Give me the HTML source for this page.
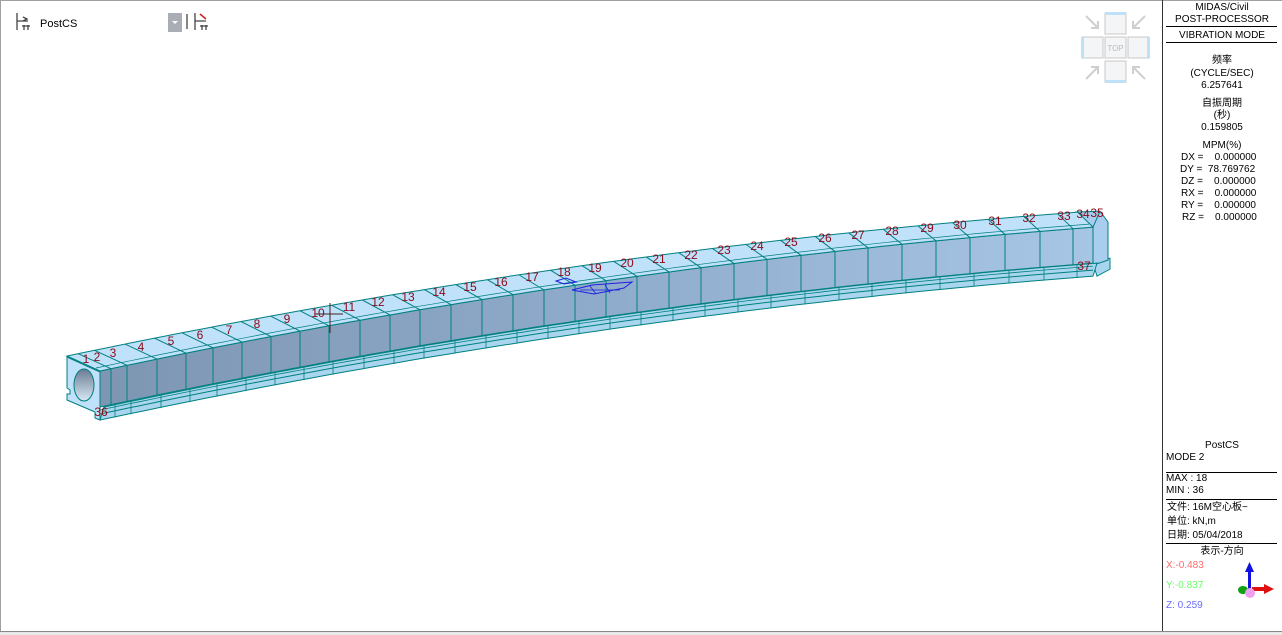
<!DOCTYPE html>
<html><head><meta charset="utf-8"><style>
html,body{margin:0;padding:0;background:#fff;}
body{width:1282px;height:635px;position:relative;overflow:hidden;font-family:"Liberation Sans","Noto Sans CJK SC",sans-serif;}
.p{position:absolute;font-size:10px;color:#000;white-space:nowrap;line-height:12px;}
.c{width:116px;left:1164px;text-align:center;}
.hl{position:absolute;left:1166px;width:111px;height:1px;background:#000;}
</style></head><body>
<div style="position:absolute;left:0;top:0;width:1282px;height:1px;background:#a0a0a0"></div>
<div style="position:absolute;left:0;top:0;width:1px;height:632px;background:#a0a0a0"></div>
<div style="position:absolute;left:1162px;top:0;width:1px;height:632px;background:#333"></div>
<div style="position:absolute;left:0;top:631px;width:1282px;height:1px;background:#888"></div>
<div style="position:absolute;left:0;top:632px;width:1282px;height:3px;background:#e8e8e8"></div>

<svg style="position:absolute;left:0;top:0" width="1162" height="631" id="sv">
<defs>
<linearGradient id="fg" x1="0" x2="1" y1="0" y2="0"><stop offset="0" stop-color="#7d96b2"/><stop offset="0.5" stop-color="#8fabcb"/><stop offset="1" stop-color="#a7c5e5"/></linearGradient>
<linearGradient id="hg" x1="0" y1="0" x2="0" y2="1"><stop offset="0" stop-color="#6a7c92"/><stop offset="1" stop-color="#d8e8f5"/></linearGradient>
</defs>
<g stroke="#444" stroke-width="1.3" fill="none">
<path d="M17 13v17M17 21h11M23 17l4 2-4 2M24 25v5M28 25v5M22 26h4M26 26h4"/>
<path d="M195 13v17M195 21h11"/><path d="M202 25v5M206 25v5M200 26h4M204 26h4"/>
<path d="M187 14v15"/>
</g>
<path d="M200 14l6 5" stroke="#d02020" stroke-width="1.5"/>
<text x="40" y="27" font-size="11" font-family="Liberation Sans" fill="#000">PostCS</text>
<rect x="168" y="13" width="14" height="19" fill="#a9aeb5"/>
<path d="M172 21l3 3 3-3z" fill="#fff"/>
<g fill="#f4f5f6" stroke="#c8c8c8">
<rect x="1105" y="13" width="21" height="21"/><rect x="1082" y="37" width="21" height="21"/><rect x="1105" y="37" width="21" height="21"/><rect x="1128" y="37" width="21" height="21"/><rect x="1105" y="61" width="21" height="21"/>
</g>
<g fill="#bfe1f7"><rect x="1105" y="12" width="21" height="3"/><rect x="1081" y="37" width="3" height="21"/><rect x="1147" y="37" width="3" height="21"/><rect x="1105" y="80" width="21" height="3"/></g>
<text x="1115.5" y="51" font-size="8" fill="#bbb" text-anchor="middle" font-family="Liberation Sans">TOP</text>
<g stroke="#cfcfcf" stroke-width="2" fill="none">
<path d="M1086 16l12 12M1098 21v7h-7"/><path d="M1145 16l-12 12M1133 21v7h7"/>
<path d="M1086 79l12-12M1098 74v-7h-7"/><path d="M1145 79l-12-12M1133 74v-7h7"/>
</g>
<g id="beam"></g>
</svg>

<div class="p c" style="top:2px">MIDAS/Civil</div>
<div class="p c" style="top:14px">POST-PROCESSOR</div>
<div class="hl" style="top:26px"></div>
<div class="p c" style="top:30px">VIBRATION MODE</div>
<div class="hl" style="top:42px"></div>
<div class="p c" style="top:55px">频率</div>
<div class="p c" style="top:68px">(CYCLE/SEC)</div>
<div class="p c" style="top:80px">6.257641</div>
<div class="p c" style="top:98px">自振周期</div>
<div class="p c" style="top:110px">(秒)</div>
<div class="p c" style="top:122px">0.159805</div>
<div class="p c" style="top:140px">MPM(%)</div>
<div class="p" style="left:1181px;top:152px">DX =&nbsp;&nbsp;&nbsp; 0.000000</div>
<div class="p" style="left:1180px;top:164px">DY =&nbsp; 78.769762</div>
<div class="p" style="left:1181px;top:176px">DZ =&nbsp;&nbsp;&nbsp; 0.000000</div>
<div class="p" style="left:1181px;top:188px">RX =&nbsp;&nbsp;&nbsp; 0.000000</div>
<div class="p" style="left:1181px;top:200px">RY =&nbsp;&nbsp;&nbsp; 0.000000</div>
<div class="p" style="left:1182px;top:212px">RZ =&nbsp;&nbsp;&nbsp; 0.000000</div>

<div class="p c" style="top:440px">PostCS</div>
<div class="p" style="left:1166px;top:452px">MODE 2</div>
<div class="hl" style="top:472px"></div>
<div class="p" style="left:1166px;top:473px">MAX : 18</div>
<div class="p" style="left:1166px;top:485px">MIN : 36</div>
<div class="hl" style="top:499px"></div>
<div class="p" style="left:1167px;top:502px">文件: 16M空心板~</div>
<div class="p" style="left:1167px;top:516px">单位: kN,m</div>
<div class="p" style="left:1167px;top:530px">日期: 05/04/2018</div>
<div class="hl" style="top:543px"></div>
<div class="p c" style="top:546px">表示-方向</div>
<div class="p" style="left:1166px;top:560px;color:#ff6b6b">X:-0.483</div>
<div class="p" style="left:1166px;top:580px;color:#66ff66">Y:-0.837</div>
<div class="p" style="left:1166px;top:600px;color:#6b6bff">Z: 0.259</div>
<svg style="position:absolute;left:1236px;top:560px" width="46" height="42">
<rect x="12" y="10" width="3" height="24" fill="#1010e0"/><path d="M9 12l4.5-10 4.5 10z" fill="#1010e0"/>
<rect x="16" y="27" width="14" height="4" fill="#e01010"/><path d="M28 24l10 5-10 5z" fill="#e01010"/>
<ellipse cx="7" cy="30" rx="5" ry="4" fill="#10a010"/>
<circle cx="14" cy="33" r="5" fill="#f0a0f0"/>
</svg>

<script>
(function(){
var g=document.getElementById('beam');
function f(x){var t=(x-100)/1008;return 371-215*t+70*t*t;}
function off(x){var t=(x-100)/1008;return [-33+18*t,-15];}
var XE=1093,N=80,tp=[],bk=[];
for(var i=0;i<=N;i++){var x=100+(XE-100)*i/N;var y=f(x);var o=off(x);tp.push([x,y]);bk.push([x+o[0],y+o[1]]);}
function pts(a){return a.map(function(p){return p[0].toFixed(1)+','+p[1].toFixed(1);}).join(' ');}
function shift(a,dx,dy){return a.map(function(p){return [p[0]+dx,p[1]+dy];});}
var s='';
var faceBot=shift(tp,0,36);
var l1=shift(tp,0,43), l2=shift(tp,0,49);
var fe=f(XE);
// right end strips & end face
s+='<polygon points="'+XE+','+(fe+36)+' 1110,'+(fe+31)+' 1110,'+(fe+42)+' '+(XE+4)+','+(fe+49)+'" fill="#a9d6ee" stroke="#008080"/>';
s+='<polygon points="'+XE+','+fe+' '+(XE-17)+','+(fe-15)+' 1100,'+(fe-16)+' 1108,'+(fe-5)+' 1108,'+(fe+33)+' '+XE+','+(fe+38)+'" fill="#a9cdee" stroke="#008080"/>';
s+='<line x1="1100" y1="'+(fe-16)+'" x2="'+XE+'" y2="'+fe+'" stroke="#008080"/>';
s+='<polygon points="'+pts(shift(faceBot,4,0))+' '+pts(l2.slice().reverse())+'" fill="#a9d6ee" stroke="#008080" stroke-width="1"/>';
s+='<polyline points="'+pts(l1)+'" fill="none" stroke="#008080"/>';
s+='<polyline points="'+pts(shift(tp,0,39))+'" fill="none" stroke="#008080" stroke-width="0.8"/>';
s+='<polygon points="'+pts(tp)+' '+pts(faceBot.slice().reverse())+'" fill="url(#fg)" stroke="#008080"/>';
s+='<polygon points="'+pts(tp)+' '+pts(bk.slice().reverse())+'" fill="#bfe1f9" stroke="#008080"/>';
s+='<polyline points="'+pts(shift(tp,-4,-3))+'" fill="none" stroke="#008080" stroke-width="0.7"/>';
s+='<path d="M67 357 L100 372 L100 420 L95 418 L95 412 L67 400 L67 394 L70 394 L70 390 L67 388 Z" fill="#bfe1f9" stroke="#008080"/>';
s+='<ellipse cx="84" cy="385" rx="10" ry="16" fill="url(#hg)" stroke="#008080"/>';
var lx=[86,97,113,141,171,200,229,257,287,318,349,378,408,439,470,501,532,564,595,627,659,691,724,757,791,825,858,892,927,960,995,1029,1064,1083,1097];
var dv=[111,127,157,186,213,242,271,300,329,360,390,420,451,482,513,544,575,606,637,669,701,734,767,801,835,868,902,936,970,1005,1040,1073];
dv.forEach(function(x){var y=f(x),o=off(x);
s+='<line x1="'+x+'" y1="'+y+'" x2="'+x+'" y2="'+(y+36)+'" stroke="#008080"/>';
s+='<line x1="'+x+'" y1="'+y+'" x2="'+(x+o[0])+'" y2="'+(y+o[1])+'" stroke="#008080"/>';
s+='<line x1="'+(x+4)+'" y1="'+(y+36)+'" x2="'+(x+4)+'" y2="'+(y+49)+'" stroke="#008080" stroke-width="0.8"/>';});
lx.forEach(function(x,i){var y=f(x+10)-9;s+='<text x="'+x+'" y="'+y.toFixed(0)+'" font-size="12" fill="#8b0a1a" font-family="Liberation Sans" text-anchor="middle">'+(i+1)+'</text>';});
s+='<text x="101" y="416" font-size="12" fill="#8b0a1a" font-family="Liberation Sans" text-anchor="middle">36</text>';
s+='<text x="1084" y="270" font-size="12" fill="#8b0a1a" font-family="Liberation Sans" text-anchor="middle">37</text>';
s+='<path d="M330 303v30M315 314h28" stroke="#4a2020" stroke-width="1"/>';
s+='<path d="M556 281l10-3 10 4-12 2zM572 290l20-5 40-3-8 6-30 6z" fill="none" stroke="#2020e0"/><path d="M580 290h40M590 286l6 8M605 285l5 8" stroke="#2020e0" stroke-width="0.8"/>';
g.innerHTML=s;
})();
</script>
</body></html>
